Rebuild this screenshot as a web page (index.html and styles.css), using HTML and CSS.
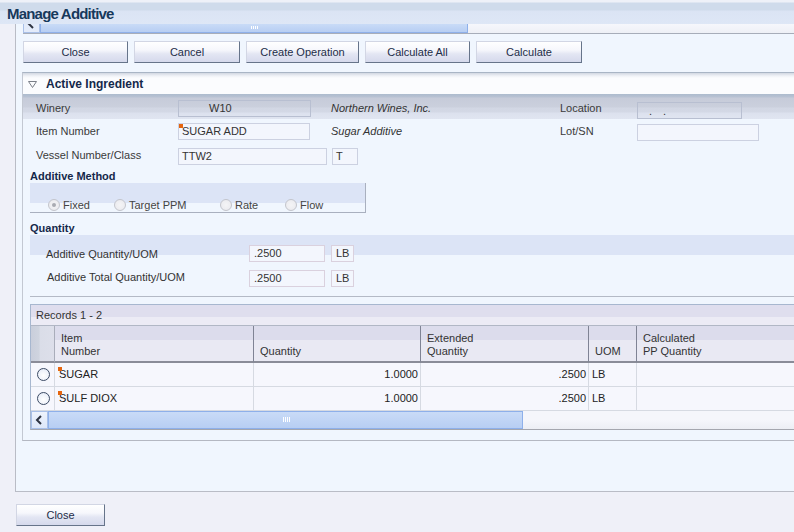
FILE: index.html
```html
<!DOCTYPE html>
<html>
<head>
<meta charset="utf-8">
<title>Manage Additive</title>
<link rel="stylesheet" href="styles.css">
</head>
<body>
<div class="titlebar"><h1 class="title">Manage Additive</h1></div>
<div class="panel">
  <div class="hscroll top-scroll">
    <div class="sb-arrow"><svg width="15" height="8" viewBox="0 0 15 8"><path d="M4 -1 L9 4" stroke="#2d3340" stroke-width="2" fill="none"/></svg></div>
    <div class="sb-thumb top-thumb"><span class="grip"></span></div>
    <div class="sb-track"></div>
  </div>
  <div class="toolbar">
    <button class="btn w105">Close</button>
    <button class="btn w106">Cancel</button>
    <button class="btn w113">Create Operation</button>
    <button class="btn w105">Calculate All</button>
    <button class="btn w106">Calculate</button>
  </div>
  <div class="section">
    <div class="section-head">
      <svg class="tri" width="9" height="7" viewBox="0 0 9 7"><path d="M0.5 0.5 H8.5 L4.5 6.5 Z" fill="none" stroke="#7a7f88" stroke-width="1"/></svg>
      <span>Active Ingredient</span>
    </div>
    <div class="frow frow-band">
      <div class="lbl">Winery</div>
      <div class="fcell"><div class="field w133 code">W10</div></div>
      <div class="desc">Northern Wines, Inc.</div>
      <div class="lbl2">Location</div>
      <div class="field w105f low"><span class="dot">.</span><span class="dot dot2">.</span></div>
    </div>
    <div class="frow">
      <div class="lbl">Item Number</div>
      <div class="fcell"><div class="field w132 req">SUGAR ADD</div></div>
      <div class="desc">Sugar Additive</div>
      <div class="lbl2">Lot/SN</div>
      <div class="field w122 low1"></div>
    </div>
    <div class="frow">
      <div class="lbl">Vessel Number/Class</div>
      <div class="field w149 low1">TTW2</div>
      <div class="field w26 low1 gap5">T</div>
    </div>

    <div class="group-title gt1">Additive Method</div>
    <div class="method-box">
      <label class="radio-item ri1"><span class="radio dis on"></span>Fixed</label>
      <label class="radio-item ri2"><span class="radio dis"></span>Target PPM</label>
      <label class="radio-item ri3"><span class="radio dis"></span>Rate</label>
      <label class="radio-item"><span class="radio dis"></span>Flow</label>
    </div>

    <div class="group-title gt2">Quantity</div>
    <div class="qty">
      <div class="qrow">
        <div class="qlbl">Additive Quantity/UOM</div>
        <div class="field qf">.2500</div>
        <div class="field qu">LB</div>
      </div>
      <div class="qrow qrow2">
        <div class="qlbl qlbl2">Additive Total Quantity/UOM</div>
        <div class="field qf">.2500</div>
        <div class="field qu">LB</div>
      </div>
    </div>

    <div class="grid">
      <div class="records">Records 1 - 2</div>
      <div class="gtable">
        <div class="gh gsel"></div>
        <div class="gh">Item<br>Number</div>
        <div class="gh">Quantity</div>
        <div class="gh">Extended<br>Quantity</div>
        <div class="gh">UOM</div>
        <div class="gh">Calculated<br>PP Quantity</div>

        <div class="gd gsel-d"><span class="radio"></span></div>
        <div class="gd mark">SUGAR</div>
        <div class="gd num">1.0000</div>
        <div class="gd num">.2500</div>
        <div class="gd uom">LB</div>
        <div class="gd"></div>

        <div class="gd gsel-d"><span class="radio"></span></div>
        <div class="gd mark">SULF DIOX</div>
        <div class="gd num">1.0000</div>
        <div class="gd num">.2500</div>
        <div class="gd uom">LB</div>
        <div class="gd"></div>
      </div>
      <div class="hscroll grid-scroll">
        <div class="sb-arrow g-arrow"><svg width="15" height="16" viewBox="0 0 15 16"><path d="M9 4 L5 8 L9 12" stroke="#2d3340" stroke-width="2" fill="none"/></svg></div>
        <div class="sb-thumb grid-thumb"><span class="grip"></span></div>
        <div class="sb-track"></div>
      </div>
    </div>
  </div>
</div>
<div class="footer"><button class="btn w89">Close</button></div>
</body>
</html>
```

FILE: styles.css
```css
html, body {
  margin: 0;
  padding: 0;
  overflow: hidden;
}
body {
  width: 794px;
  height: 532px;
  background: #eff0f8;
  font-family: "Liberation Sans", Arial, sans-serif;
  font-size: 11px;
  color: #3a3a3a;
}
.titlebar {
  height: 24px;
  background: linear-gradient(to bottom, #eef1f8 0, #eef1f8 2px, #cfdbeb 3px, #cfdbeb 10px, #dbe4f4 11px, #dee7f6 100%);
}
.title {
  margin: 0;
  padding: 4px 0 0 7px;
  font-size: 15px;
  line-height: 20px;
  font-weight: bold;
  letter-spacing: -0.8px;
  color: #17395c;
}
.panel {
  margin-left: 15px;
  height: 467px;
  border-left: 1px solid #b9bcc6;
  border-bottom: 1px solid #b9bcc6;
  background: #f0f6fe;
  overflow: hidden;
}
.hscroll {
  display: flex;
}
.top-scroll {
  margin-left: 7px;
  height: 9px;
  border-bottom: 1px solid #a7adb9;
}
.sb-arrow {
  width: 17px;
  box-sizing: border-box;
  border: 1px solid #a9c0e8;
  border-top: none;
  background: #e3ebfa;
  overflow: hidden;
}
.sb-arrow svg { display: block; }
.sb-thumb {
  position: relative;
  box-sizing: border-box;
  background: linear-gradient(to bottom, #c9dbf7, #b7cef3);
  border: 1px solid #8eb0ea;
}
.top-thumb {
  width: 428px;
  border-top: none;
}
.grip {
  position: absolute;
  top: 50%;
  left: 50%;
  width: 7px;
  height: 5px;
  margin: -3px 0 0 -3px;
  background: repeating-linear-gradient(to right, #ffffff 0, #ffffff 1px, transparent 1px, transparent 2px);
}
.top-thumb .grip { height: 3px; margin-top: -2px; }
.sb-track {
  flex: 1;
  background: linear-gradient(to bottom, #f6f7fc, #eef0f6);
}
.toolbar {
  display: flex;
  gap: 6px;
  margin: 7px 0 9px 7px;
}
.btn {
  height: 22px;
  padding: 0;
  box-sizing: border-box;
  border: 1px solid;
  border-color: #d2d6e4 #66748a #66748a #d2d6e4;
  background: linear-gradient(to bottom, #ffffff 0, #f6f7fc 40%, #e3e6f3 60%, #d5d9ec 100%);
  font-family: "Liberation Sans", Arial, sans-serif;
  font-size: 11px;
  color: #1e2d48;
  text-align: center;
}
.w105 { width: 105px; }
.w106 { width: 106px; }
.w113 { width: 113px; }
.w89 { width: 89px; }
.section {
  margin-left: 6px;
  border-top: 1px solid #a9b5c5;
  border-left: 1px solid #c3c8d2;
  border-bottom: 1px solid #b4b8c2;
  padding-bottom: 10px;
}
.section-head {
  height: 21px;
  display: flex;
  align-items: center;
  background: linear-gradient(to bottom, #d2d8e2 0, #f0f2f7 3px, #fbfcfe 5px, #fbfcfe 100%);
  font-size: 12px;
  font-weight: bold;
  color: #14284a;
}
.tri { margin: 1px 9px 0 5px; }
.frow {
  display: flex;
  align-items: center;
  height: 24px;
}
.frow-band {
  height: 22px;
  padding-top: 3px;
  background: linear-gradient(to bottom, #adbbce 0, #b8c2d3 3px, #c6cbd9 4px, #cbd0dd 13px, #d2d7e4 14px, #d3d8e5 18px, #dce1ee 19px, #e0e5f1 100%);
}
.lbl {
  width: 142px;
  padding-left: 13px;
}
.fcell { width: 153px; }
.desc {
  width: 229px;
  font-style: italic;
  color: #333;
}
.lbl2 { width: 77px; }
.field {
  height: 17px;
  line-height: 15px;
  box-sizing: border-box;
  border: 1px solid #ccd1e1;
  background: #f3f6fd;
  padding-left: 3px;
  color: #333;
  position: relative;
  white-space: nowrap;
}
.frow-band .field {
  background: transparent;
  border-color: #b8bfd1;
}
.code { padding-left: 30px; }
.w133 { width: 133px; }
.w132 { width: 132px; }
.w105f { width: 105px; }
.w122 { width: 122px; }
.w149 { width: 149px; }
.w26 { width: 26px; }
.gap5 { margin-left: 5px; }
.low { margin-top: 4px; }
.low1 { margin-top: 2px; }
.dot { padding-left: 8px; line-height: 17px; }
.dot2 { padding-left: 11px; }
.req::before {
  content: "";
  position: absolute;
  left: 0;
  top: 0;
  width: 4px;
  height: 4px;
  background: #e5650f;
}
.group-title {
  height: 14px;
  line-height: 14px;
  padding-left: 7px;
  font-size: 11px;
  font-weight: bold;
  color: #14284a;
}
.gt1 { margin-top: 2px; }
.gt2 { margin-top: 8px; }
.method-box {
  margin-left: 7px;
  width: 336px;
  height: 30px;
  box-sizing: border-box;
  border-right: 1px solid #a9b0bf;
  border-bottom: 1px solid #a9b0bf;
  background: linear-gradient(to bottom, #dce4f6 0, #dce4f6 20px, transparent 20px);
  display: flex;
  align-items: center;
  padding: 14px 0 0 18px;
}
.radio-item {
  display: flex;
  align-items: center;
  color: #444;
  height: 12px;
  line-height: 12px;
}
.ri1 { width: 66px; }
.ri2 { width: 106px; }
.ri3 { width: 65px; }
.radio {
  display: inline-block;
  width: 12px;
  height: 12px;
  box-sizing: border-box;
  border-radius: 50%;
  border: 1px solid #3c4b65;
  background: radial-gradient(circle at 50% 60%, #ffffff 0, #eef2fa 60%, #d8e0ee 100%);
  margin-right: 3px;
  flex: none;
  position: relative;
}
.radio.dis {
  border-color: #c3c5cc;
  background: radial-gradient(circle at 50% 50%, #f4f4f6 0, #ececf0 70%, #e0e1e6 100%);
}
.radio.on::after {
  content: "";
  position: absolute;
  left: 3px;
  top: 3px;
  width: 4px;
  height: 4px;
  border-radius: 50%;
  background: #a9abb2;
}
.qty {
  margin-left: 7px;
  border-bottom: 1px solid #b4bac6;
  background: linear-gradient(to bottom, #dce4f6 0, #dce4f6 20px, transparent 20px);
  padding-top: 9px;
  box-sizing: border-box;
  height: 62px;
}
.qrow {
  display: flex;
  align-items: center;
  height: 19px;
}
.qrow2 { margin-top: 6px; }
.qlbl {
  width: 203px;
  padding-left: 16px;
  color: #333;
}
.qlbl2 {
  padding-left: 17px;
  width: 202px;
  margin-bottom: 4px;
}
.qf {
  width: 76px;
  border-color: #dad1de;
  padding-left: 4px;
}
.qu {
  width: 23px;
  margin-left: 6px;
  border-color: #dad1de;
  padding-left: 4px;
}
.grid {
  margin: 7px 0 0 7px;
  border-top: 1px solid #a7b7cf;
  border-left: 1px solid #a7b7cf;
  border-bottom: 1px solid #a4a6ae;
  overflow: hidden;
}
.records {
  height: 20px;
  line-height: 20px;
  padding-left: 5px;
  border-bottom: 1px solid #b1b7c5;
  background: linear-gradient(to bottom, #dfdeee 0, #dfdeee 12px, #ecebf5 12px, #ecebf5 100%);
  color: #333;
}
.gtable {
  display: grid;
  grid-template-columns: 24px 199px 167px 168px 48px 300px;
  grid-template-rows: 37px 24px 24px;
}
.gh {
  box-sizing: border-box;
  border-right: 1px solid #7f8394;
  border-bottom: 2px solid #8a8c98;
  background: linear-gradient(to bottom, #dcdcec 0, #dcdcec 40%, #e9e9f3 40%, #e9e9f3 100%);
  padding: 0 0 3px 6px;
  display: flex;
  flex-direction: column;
  justify-content: flex-end;
  line-height: 13px;
  color: #333;
}
.gsel {
  padding: 0;
  border-right-color: #a9adba;
  background: linear-gradient(to right, #c9cedb 0, #cfd4df 35%, #dadde8 40%, #dddfea 100%);
}
.gd {
  box-sizing: border-box;
  border-right: 1px solid #d6dae2;
  border-bottom: 1px solid #d6dae2;
  background: #f6f7fd;
  line-height: 23px;
  color: #222;
  position: relative;
  white-space: nowrap;
}
.gsel-d {
  display: flex;
  align-items: center;
  padding-left: 6px;
}
.gsel-d .radio { width: 13px; height: 13px; }
.mark { padding-left: 4px; }
.mark::before {
  content: "";
  position: absolute;
  left: 3px;
  top: 4px;
  width: 4px;
  height: 4px;
  background: #e5650f;
}
.num {
  text-align: right;
  padding-right: 2px;
}
.uom { padding-left: 3px; }
.grid-scroll {
  height: 18px;
}
.g-arrow {
  border-top: 1px solid #a9c0e8;
  background: linear-gradient(to bottom, #eef3fc, #dde7f9);
}
.grid-thumb {
  width: 475px;
}
.grid-scroll .sb-track {
  background: linear-gradient(to bottom, #f5f6fb 0, #f5f6fb 50%, #eceef4 100%);
}
.footer {
  padding: 12px 0 0 16px;
}
```
